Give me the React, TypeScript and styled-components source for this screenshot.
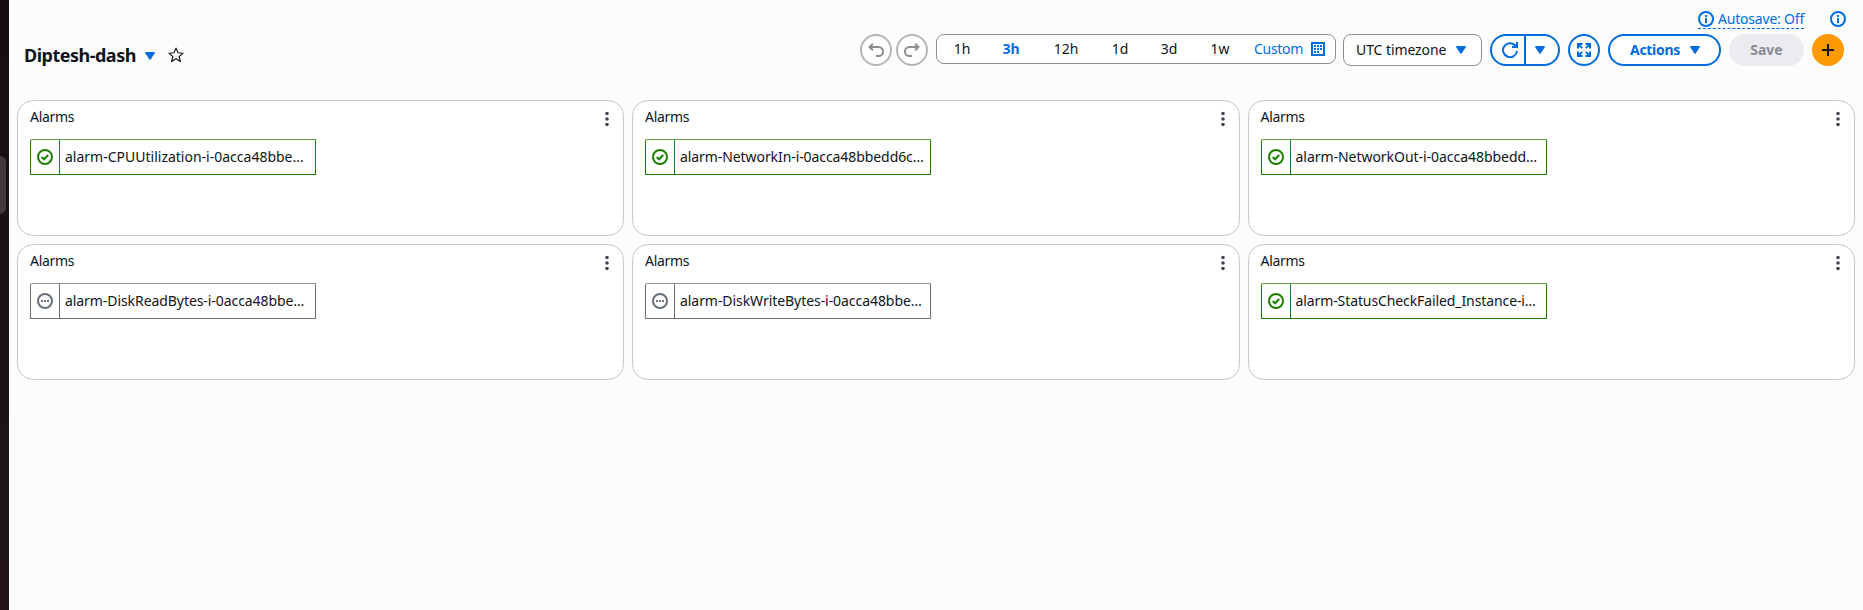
import React from "react";
import styled, { createGlobalStyle } from "styled-components";

const blue = "#006ce0";
const font = '"Noto Sans", "Open Sans", sans-serif';

const GlobalStyle = createGlobalStyle`
  * { box-sizing: border-box; }
  body { margin: 0; background: #fcfcfd; color: #0f141a; font: 14px/20px ${font}; }
  button { font: inherit; color: inherit; margin: 0; padding: 0; border: 0; background: none; }
  svg { display: block; flex: none; }
`;

const Page = styled.div`
  display: flex;
  height: 610px;
  overflow: hidden;
`;
const Dock = styled.aside`
  width: 9px;
  flex: none;
  background: linear-gradient(#190d13, #1d1118 50%, #211319);
  padding-top: 156px;
`;
const DockHandle = styled.div`
  width: 6px;
  height: 58px;
  border-radius: 0 6px 6px 0;
  background: #433a3f;
`;
const Main = styled.main`
  flex: 1;
  padding: 0 8px;
`;
const StatusRow = styled.div`
  display: flex;
  justify-content: flex-end;
  gap: 26px;
  height: 34px;
  padding: 11px 9px 0 0;
  color: ${blue};
`;
const Autosave = styled.div`
  display: flex;
  gap: 4px;
  height: 18px;
  line-height: 16px;
  width: 106px;
  border-bottom: 1px dashed ${blue};
  letter-spacing: -0.2px;
`;
const Header = styled.header`
  display: flex;
  justify-content: space-between;
  height: 66px;
  padding: 0 11px 0 7px;
`;
const TitleGroup = styled.div`
  display: flex;
  align-items: center;
  height: 42px;
`;
const Title = styled.h1`
  margin: 0;
  width: 112px;
  font-size: 18px;
  line-height: 24px;
  font-weight: 700;
  letter-spacing: -0.5px;
  white-space: nowrap;
`;
const Toolbar = styled.div`
  display: flex;
  align-items: flex-start;
`;
const RoundButton = styled.button<{ $tone: string; $gap: number }>`
  display: grid;
  place-items: center;
  width: 32px;
  height: 32px;
  margin-right: ${(p) => p.$gap}px;
  border: 2px solid ${(p) => p.$tone};
  border-radius: 50%;
  background: #fff;
`;
const AddButton = styled(RoundButton)`
  background: #ff9900;
`;
const RangeGroup = styled.div`
  display: flex;
  align-items: center;
  width: 400px;
  height: 30px;
  margin-right: 7px;
  border: 1px solid #8c8c94;
  border-radius: 8px;
  background: #fff;
`;
const Range = styled.button<{ $width: number; $active?: boolean }>`
  width: ${(p) => p.$width}px;
  text-align: center;
  color: ${(p) => (p.$active ? blue : "inherit")};
  font-weight: ${(p) => (p.$active ? 700 : 400)};
`;
const CustomRange = styled.button`
  display: flex;
  align-items: center;
  justify-content: space-between;
  width: 71px;
  margin-left: 9px;
  color: ${blue};
  white-space: nowrap;
  letter-spacing: -0.3px;
`;
const Select = styled.button`
  display: flex;
  align-items: center;
  justify-content: space-between;
  width: 139px;
  height: 32px;
  margin-right: 8px;
  padding: 0 15px 0 12px;
  border: 1px solid #8c8c94;
  border-radius: 8px;
  background: #fff;
  letter-spacing: -0.08px;
`;
const SplitButton = styled.div`
  display: flex;
  width: 70px;
  height: 32px;
  margin-right: 8px;
  border: 2px solid ${blue};
  border-radius: 16px;
  background: #fff;
`;
const SplitMain = styled.button`
  display: grid;
  place-items: center end;
  width: 34px;
  padding-right: 6px;
  border-right: 2px solid ${blue};
`;
const SplitMenu = styled.button`
  display: grid;
  place-items: center start;
  padding-left: 9px;
`;
const ActionsButton = styled.button`
  display: flex;
  align-items: center;
  justify-content: space-between;
  width: 113px;
  height: 32px;
  margin-right: 8px;
  padding: 0 19px 0 20px;
  border: 2px solid ${blue};
  border-radius: 16px;
  background: #fff;
  color: ${blue};
  font-weight: 700;
  letter-spacing: -0.3px;
`;
const SaveButton = styled.button`
  width: 75px;
  height: 32px;
  margin-right: 8px;
  border-radius: 16px;
  background: #ebebf0;
  color: #8c8c94;
  font-weight: 700;
`;
const Grid = styled.section`
  display: grid;
  grid-template-columns: 607px 607.5px 1fr;
  grid-auto-rows: 136px;
  gap: 8px;
`;
const Card = styled.article`
  border: 1px solid #c6c6cd;
  border-radius: 16px;
  background: #fff;
  padding: 6px 12px;
`;
const CardHeader = styled.div`
  display: flex;
  justify-content: space-between;
  height: 32px;
`;
const CardTitle = styled.h2`
  margin: 0;
  font-size: 14px;
  line-height: 20px;
  font-weight: 400;
  letter-spacing: -0.3px;
`;
const Menu = styled.button`
  height: 16px;
  margin-top: 4px;
`;
const AlarmBox = styled.div<{ $ok: boolean }>`
  display: flex;
  width: 286px;
  height: 36px;
  border: 1px solid ${(p) => (p.$ok ? "#1d8102" : "#687078")};
  border-top-color: ${(p) => (p.$ok ? "#5aa746" : "#8f959b")};
  border-top-left-radius: 2px;
`;
const AlarmState = styled.div<{ $ok: boolean }>`
  display: grid;
  place-items: center;
  width: 29px;
  padding-bottom: 1px;
  border-right: 1px solid ${(p) => (p.$ok ? "#16803c" : "#687078")};
`;
const AlarmName = styled.div<{ $spacing: number }>`
  padding-left: 5px;
  line-height: 34px;
  white-space: nowrap;
  letter-spacing: ${(p) => p.$spacing}px;
`;
const TitleMenu = styled.button`
  padding: 2px 13px 0 9px;
`;

const Caret = () => (
  <svg width="10" height="8" viewBox="0 0 10 8">
    <path d="M0.8 0.8h8.4L5 7.2z" fill={blue} stroke={blue} strokeWidth="1.4" strokeLinejoin="round" />
  </svg>
);

const Info = () => (
  <svg width="16" height="16" viewBox="0 0 16 16" fill="none" stroke={blue} strokeWidth="2">
    <circle cx="8" cy="8" r="7" />
    <path d="M8 7v5M8 4v2" />
  </svg>
);

const Star = () => (
  <svg width="16" height="16" viewBox="0 0 16 16" fill="none" stroke="#0f141a" strokeWidth="1.1" strokeLinejoin="round">
    <path d="M8 1.1l2 4.7 5.1.4-3.9 3.3 1.2 5L8 11.8l-4.4 2.7 1.2-5L.9 6.2 6 5.8z" />
  </svg>
);

const Undo = ({ flip }: { flip?: boolean }) => (
  <svg width="16" height="16" viewBox="0 0 16 16" fill="none" stroke="#8c8c94" strokeWidth="2">
    <g transform={flip ? "translate(16 0) scale(-1 1)" : undefined}>
      <path d="M4.9 1.8L1.6 5l3.3 3.2M1.6 5h8.9a4.5 4.5 0 0 1 0 9H8" />
    </g>
  </svg>
);

const Calendar = () => (
  <svg width="14" height="14" viewBox="0 0 14 14" fill={blue}>
    <path fillRule="evenodd" d="M0 0h14v14H0zM2 2v10h10V2z" />
    <path d="M6 3h2v2H6zM9 3h2v2H9zM3 6h2v2H3zM6 6h2v2H6zM9 6h2v2H9zM3 9h2v2H3zM6 9h2v2H6zM3 3h2v2H3z" />
  </svg>
);

const Refresh = () => (
  <svg width="16" height="16" viewBox="0 0 16 16" fill="none" stroke={blue} strokeWidth="2">
    <path d="M15 9A7 7 0 1 1 13 3.2L14.6 5M15 0v5H10" />
  </svg>
);

const Expand = () => (
  <svg width="14" height="14" viewBox="0 0 14 14" fill="none" stroke={blue} strokeWidth="2">
    <path d="M1 5.5V1h4.5M8.5 1H13v4.5M1 8.5V13h4.5M8.5 13H13V8.5" />
    <path d="M1 1l4.2 4.2M13 1L8.8 5.2M1 13l4.2-4.2M13 13L8.8 8.8" strokeWidth="1.8" />
  </svg>
);

const Plus = () => (
  <svg width="12" height="12" viewBox="0 0 12 12" stroke="#0f141a" strokeWidth="2">
    <path d="M6 0v12M0 6h12" />
  </svg>
);

const Dots = () => (
  <svg width="8" height="16" viewBox="0 0 8 16" fill="#424650">
    <circle cx="4" cy="2.5" r="1.8" />
    <circle cx="4" cy="8" r="1.8" />
    <circle cx="4" cy="13.5" r="1.8" />
  </svg>
);

const OkIcon = () => (
  <svg width="16" height="16" viewBox="0 0 16 16" fill="none" stroke="#1d8102" strokeWidth="2">
    <circle cx="8" cy="8" r="7" />
    <path d="M4.7 8l2.4 2.3 4.1-4.3" />
  </svg>
);

const PendingIcon = () => (
  <svg width="16" height="16" viewBox="0 0 16 16" fill="none" stroke="#687078" strokeWidth="2">
    <circle cx="8" cy="8" r="7" />
    <path d="M4 8h2M7 8h2M10 8h2" />
  </svg>
);

const ranges = [
  { label: "1h", width: 50 },
  { label: "3h", width: 48, active: true },
  { label: "12h", width: 62 },
  { label: "1d", width: 46 },
  { label: "3d", width: 52 },
  { label: "1w", width: 50 },
];

const alarms = [
  { name: "alarm-CPUUtilization-i-0acca48bbe…", ok: true, spacing: 0 },
  { name: "alarm-NetworkIn-i-0acca48bbedd6c…", ok: true, spacing: -0.08 },
  { name: "alarm-NetworkOut-i-0acca48bbedd…", ok: true, spacing: -0.04 },
  { name: "alarm-DiskReadBytes-i-0acca48bbe…", ok: false, spacing: -0.07 },
  { name: "alarm-DiskWriteBytes-i-0acca48bbe…", ok: false, spacing: -0.06 },
  { name: "alarm-StatusCheckFailed_Instance-i…", ok: true, spacing: -0.1 },
];

export default function App() {
  return (
    <Page>
      <GlobalStyle />
      <Dock>
        <DockHandle />
      </Dock>
      <Main>
        <StatusRow>
          <Autosave>
            <Info />
            <span>Autosave:&nbsp;Off</span>
          </Autosave>
          <Info />
        </StatusRow>
        <Header>
          <TitleGroup>
            <Title>Diptesh-dash</Title>
            <TitleMenu aria-label="Switch dashboard"><Caret /></TitleMenu>
            <Star />
          </TitleGroup>
          <Toolbar>
            <RoundButton $tone="#b4b4bb" $gap={4} aria-label="Undo"><Undo /></RoundButton>
            <RoundButton $tone="#b4b4bb" $gap={8} aria-label="Redo"><Undo flip /></RoundButton>
            <RangeGroup>
              {ranges.map((r) => (
                <Range key={r.label} $width={r.width} $active={r.active}>{r.label}</Range>
              ))}
              <CustomRange>Custom <Calendar /></CustomRange>
            </RangeGroup>
            <Select>UTC timezone <Caret /></Select>
            <SplitButton>
              <SplitMain aria-label="Refresh"><Refresh /></SplitMain>
              <SplitMenu aria-label="Refresh options"><Caret /></SplitMenu>
            </SplitButton>
            <RoundButton $tone={blue} $gap={8} aria-label="Full screen"><Expand /></RoundButton>
            <ActionsButton>Actions <Caret /></ActionsButton>
            <SaveButton>Save</SaveButton>
            <AddButton $tone="#ff9900" $gap={0} aria-label="Add widget"><Plus /></AddButton>
          </Toolbar>
        </Header>
        <Grid>
          {alarms.map((a, i) => (
            <Card key={i}>
              <CardHeader>
                <CardTitle>Alarms</CardTitle>
                <Menu aria-label="Widget actions"><Dots /></Menu>
              </CardHeader>
              <AlarmBox $ok={a.ok}>
                <AlarmState $ok={a.ok}>{a.ok ? <OkIcon /> : <PendingIcon />}</AlarmState>
                <AlarmName $spacing={a.spacing}>{a.name}</AlarmName>
              </AlarmBox>
            </Card>
          ))}
        </Grid>
      </Main>
    </Page>
  );
}
